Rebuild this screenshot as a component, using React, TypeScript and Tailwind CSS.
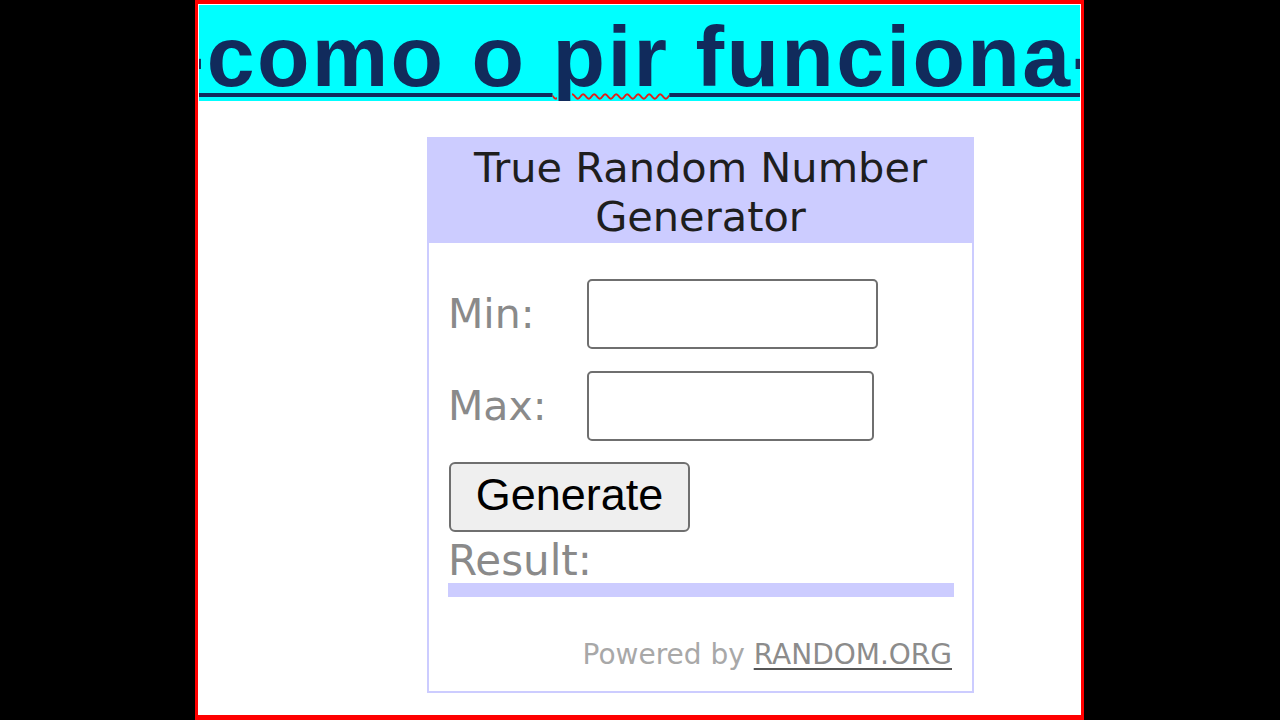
const Field = ({ label, width }: { label: string; width: number }) => {
  return (
    <div className="flex items-center h-[70px]">
      <span className="w-[139px] text-[41px] leading-[49px] text-[#8a8a8a]">{label}</span>
      <div
        className="h-[70px] rounded-[5px] border-2 border-[#6f6f6f] bg-white"
        style={{ width }}
      ></div>
    </div>
  );
};

const RandomWidget = () => {
  return (
    <div
      className="ml-[228px] mt-[36px] w-[547px] border-2 border-[#ccccff] bg-white"
      style={{ fontFamily: '"DejaVu Sans", Verdana, sans-serif' }}
    >
      <div className="h-[104px] bg-[#ccccff] pt-[4px] text-center text-[41.5px] leading-[49px] text-[#1e1e1e]">
        True Random Number
        <br />
        Generator
      </div>

      <div className="pl-[19px] pr-[20px] pt-[36px] pb-[20px]">
        <Field label="Min:" width={291} />
        <div className="mt-[22px]">
          <Field label="Max:" width={287} />
        </div>

        <button
          className="mt-[21px] ml-[1px] flex h-[70px] w-[241px] items-center justify-center rounded-[6px] border-2 border-[#6f6f6f] bg-[#efefef] pb-[4px] text-[45px] text-black"
          style={{ fontFamily: '"Liberation Sans", Arial, sans-serif' }}
        >
          Generate
        </button>

        <div className="mt-[6px] text-[42px] leading-[45px] text-[#8a8a8a]">Result:</div>
        <div className="h-[14px] w-[506px] bg-[#ccccff]"></div>

        <div className="mt-[42px] text-right text-[28px] leading-[32px] text-[#a8a8a8]">
          Powered by{' '}
          <span className="text-[#8c8c8c] underline decoration-[#555] decoration-2 underline-offset-[4px]">
            RANDOM.ORG
          </span>
        </div>
      </div>
    </div>
  );
};

export default function App() {
  return (
    <div className="h-[720px] w-[1280px] overflow-hidden bg-black">
      <div className="ml-[195px] h-[720px] w-[889px] border-x-[3px] border-t-[4px] border-b-[5px] border-[#ff0000] bg-white p-[1px]">
        <div
          className="flex h-[96px] justify-center overflow-hidden whitespace-nowrap bg-[#00ffff] pt-[8px] text-[86px] font-bold leading-[86px] tracking-[2.3px] text-[#112b5c]"
          style={{ fontFamily: '"Liberation Sans", Arial, sans-serif' }}
        >
          <span className="shrink-0">
            <span className="underline decoration-[#112b5c] decoration-[4px] underline-offset-[7px]">-como o </span>
            <span className="underline decoration-wavy decoration-[#e0201a] decoration-[2px] underline-offset-[7px]">pir</span>
            <span className="underline decoration-[#112b5c] decoration-[4px] underline-offset-[7px]"> funciona-</span>
          </span>
        </div>

        <RandomWidget />
      </div>
    </div>
  );
}
